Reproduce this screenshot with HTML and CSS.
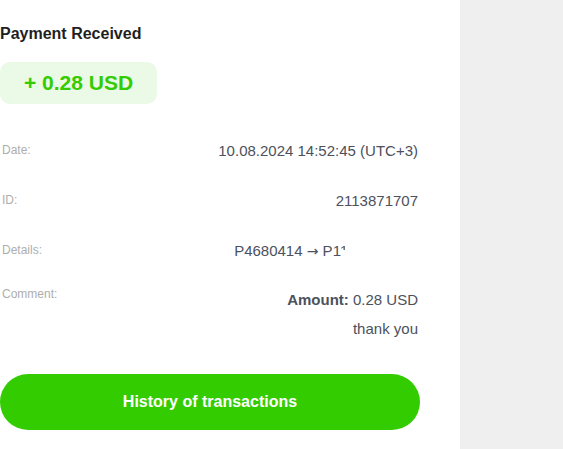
FILE: index.html
```html
<!DOCTYPE html>
<html>
<head>
<meta charset="utf-8">
<link rel="stylesheet" href="styles.css">
</head>
<body>
<div class="page">
  <main class="main">
    <h1 class="title">Payment Received</h1>
    <div class="badge">+ 0.28 USD</div>
    <div class="rows">
      <div class="row">
        <span class="label">Date:</span>
        <span class="value">10.08.2024 14:52:45 (UTC+3)</span>
      </div>
      <div class="row">
        <span class="label">ID:</span>
        <span class="value">2113871707</span>
      </div>
      <div class="row">
        <span class="label">Details:</span>
        <span class="value">P4680414 <span class="arrow">→</span> P1<span class="partial">1</span><span class="hidden">12345678&nbsp;</span></span>
      </div>
      <div class="row comment">
        <span class="label">Comment:</span>
        <div class="value comment-value">
          <div><b>Amount:</b> 0.28 USD</div>
          <div>thank you</div>
        </div>
      </div>
    </div>
    <button class="history">History of transactions</button>
  </main>
  <aside class="side"></aside>
</div>
</body>
</html>
```

FILE: styles.css
```css
* { box-sizing: border-box; }
html, body { margin: 0; padding: 0; }
body {
  font-family: "Liberation Sans", Arial, sans-serif;
  background: #ffffff;
}
.page {
  display: flex;
  height: 449px;
  width: 563px;
}
.main {
  width: 460px;
  background: #ffffff;
  padding: 24px 0 0 0;
}
.side {
  flex: 1;
  background: #efefef;
}
.title {
  margin: 0;
  font-size: 16px;
  line-height: 20px;
  font-weight: bold;
  color: #1f1f1f;
}
.badge {
  display: inline-flex;
  align-items: center;
  height: 42px;
  margin-top: 18px;
  padding: 0 24px;
  border-radius: 10px;
  background: #ebfae6;
  color: #33cc00;
  font-weight: bold;
  font-size: 21px;
}
.rows {
  width: 420px;
  margin-top: 21px;
}
.row {
  display: flex;
  justify-content: space-between;
  align-items: center;
  height: 50px;
  padding: 0 2px;
}
.label {
  font-size: 12px;
  line-height: 16px;
  color: #aeaeae;
}
.value {
  font-size: 15px;
  color: #4c515d;
  text-align: right;
  white-space: nowrap;
}
.arrow {
  font-family: "DejaVu Sans", sans-serif;
  font-size: 14px;
}
.partial {
  background: linear-gradient(to bottom, #4c515d 45%, transparent 45%);
  -webkit-background-clip: text;
  background-clip: text;
  color: transparent;
}
.hidden { color: transparent; }
.row.comment {
  height: auto;
  align-items: flex-start;
  margin-top: 10px;
}
.row.comment .label { margin-top: 1px; }
.comment-value { line-height: 29px; }
.comment-value b { font-weight: bold; }
.history {
  display: block;
  width: 420px;
  height: 56px;
  margin-top: 31px;
  border: none;
  border-radius: 28px;
  background: #33cc00;
  color: #ffffff;
  font-family: "Liberation Sans", Arial, sans-serif;
  font-weight: bold;
  font-size: 16px;
  padding: 0;
}
```
